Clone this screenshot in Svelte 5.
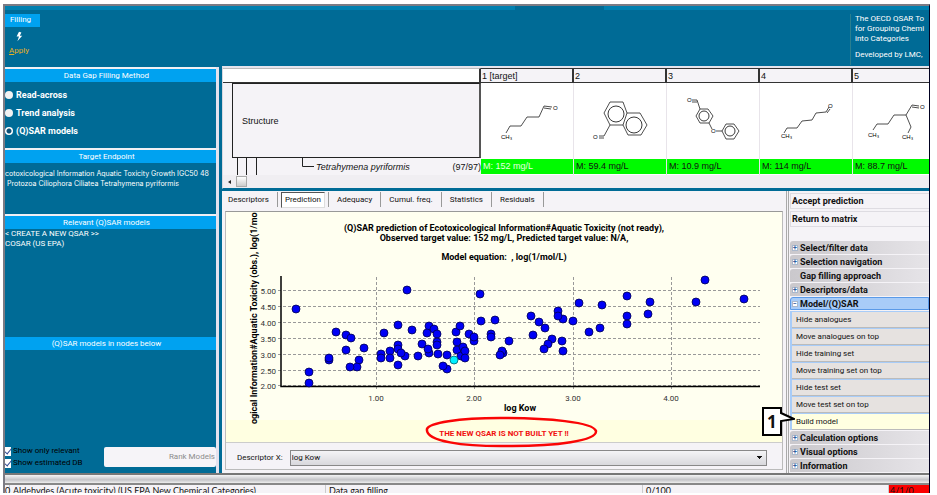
<script lang="ts">
    type Molecule = {
        id: string;
        value: string;
        bonds: string;
        rings?: [number, number, number][];
        atoms: [number, number, string][];
    };

    let method = $state("qsar");
    let onlyRelevant = $state(true);
    let showEstimated = $state(true);
    let activeTab = $state("Prediction");
    let descriptor = $state("log Kow");

    const methods = [
        { id: "read", label: "Read-across" },
        { id: "trend", label: "Trend analysis" },
        { id: "qsar", label: "(Q)SAR models" },
    ];

    const tabs = ["Descriptors", "Prediction", "Adequacy", "Cumul. freq.", "Statistics", "Residuals"];

    const molecules: Molecule[] = [
        {
            id: "1 [target]",
            value: "M: 152 mg/L",
            bonds: "M25 50L29 43H40L46 34H58L63 23L71 24M63 25L70 26",
            atoms: [[72, 27, "O"], [20, 56, "CH₃"]],
        },
        {
            id: "2",
            value: "M: 59.4 mg/L",
            bonds: "M36 19H49L53 30L49 42H36L30 30ZM53 30H66L73 42L67 52H54L49 42M36 42L30 53H25M30 55H25",
            rings: [[42, 31, 8], [60, 42, 8]],
            atoms: [[19, 56, "O"]],
        },
        {
            id: "3",
            value: "M: 10.9 mg/L",
            bonds: "M25 17H30L33 26M25 19H30M33 26H41L46 33L42 40H33L29 33ZM42 40L45 46M49 48H55L59 41H67L72 48L67 56H59L55 48",
            rings: [[37, 33, 5], [63, 48, 5]],
            atoms: [[20, 19, "O"], [44, 50, "O"]],
        },
        {
            id: "4",
            value: "M: 114 mg/L",
            bonds: "M24 50L27 45H37L42 38L52 37L56 30L66 29L69 24M67 30L70 26",
            atoms: [[68, 25, "O"], [21, 55, "CH₃"]],
        },
        {
            id: "5",
            value: "M: 88.7 mg/L",
            bonds: "M20 47L24 41H35L41 32H53L59 22L66 23M59 24L66 25M53 32L58 44L55 50",
            atoms: [[67, 26, "O"], [15, 54, "CH₃"], [49, 56, "CH₃"]],
        },
    ];

    const yTicks = [
        ["5.00", 78], ["4.50", 94], ["4.00", 110], ["3.50", 126],
        ["3.00", 142], ["2.50", 158], ["2.00", 173],
    ] as [string, number][];
    const xTicks = [["1.00", 150], ["2.00", 248], ["3.00", 347], ["4.00", 445]] as [string, number][];

    const points = [
        [70, 97], [181, 78], [254, 82], [255, 109], [269, 108], [83, 160], [83, 171],
        [103, 148], [103, 146], [110, 120], [120, 123], [125, 126], [120, 138], [138, 136],
        [133, 148], [131, 155], [124, 155], [158, 121], [172, 113], [186, 118], [155, 142],
        [155, 146], [164, 139], [164, 146], [172, 133], [172, 137], [179, 144], [175, 141],
        [172, 153], [192, 144], [196, 132], [203, 141], [202, 137], [203, 114], [201, 121],
        [208, 117], [211, 122], [211, 130], [211, 133], [212, 142], [221, 143], [221, 157],
        [217, 154], [230, 120], [234, 114], [231, 130], [231, 138], [237, 135], [235, 144],
        [239, 139], [239, 146], [243, 122], [248, 129], [248, 125], [265, 122], [265, 125],
        [283, 129], [277, 141], [276, 139], [274, 143], [479, 68], [518, 87], [470, 90],
        [424, 90], [422, 102], [401, 84], [401, 104], [401, 112], [376, 93], [353, 91],
        [347, 109], [337, 107], [332, 99], [332, 104], [305, 104], [313, 110], [319, 116],
        [374, 116], [363, 120], [307, 123], [326, 127], [322, 132], [318, 137], [336, 129],
        [337, 139],
    ];

    const actions = [
        "Hide analogues", "Move analogues on top", "Hide training set",
        "Move training set on top", "Hide test set", "Move test set on top",
    ];
</script>

{#snippet group(label: string, mark: string = "+")}
    <button class="group" class:open={mark === "−"}>
        <span class="mark" class:blank={!mark}>{mark}</span>{label}
    </button>
{/snippet}

<div class="window">
    <header class="banner">
        <div class="ribbon">
            <div class="ribbon-title">Filling</div>
            <button class="apply">
                <svg width="8" height="11" viewBox="0 0 10 12" aria-hidden="true">
                    <path d="M5 0L2 6h3L3 12L9 5H6L8 1z" fill="#fff" />
                </svg>
                <span><u>A</u>pply</span>
            </button>
        </div>
        <div class="progress-strip"></div>
        <div class="product">
            <p>The OECD QSAR To<br />for Grouping Chemi<br />into Categories</p>
            <p>Developed by LMC,</p>
        </div>
    </header>

    <div class="body">
        <aside class="sidebar">
            <section class="panel method">
                <h2>Data Gap Filling Method</h2>
                {#each methods as m}
                    <label class="radio">
                        <input type="radio" name="method" value={m.id} bind:group={method} />{m.label}
                    </label>
                {/each}
            </section>
            <section class="panel endpoint">
                <h2>Target Endpoint</h2>
                <p>cotoxicological Information Aquatic Toxicity Growth IGC50 48<br />&nbsp;Protozoa Ciliophora Ciliatea Tetrahymena pyriformis</p>
            </section>
            <section class="panel relevant">
                <h2>Relevant (Q)SAR models</h2>
                <ul>
                    <li>&lt; CREATE A NEW QSAR &gt;&gt;</li>
                    <li>COSAR (US EPA)</li>
                </ul>
            </section>
            <section class="panel nodes">
                <h2>(Q)SAR models in nodes below</h2>
                <div class="nodes-foot">
                    <div>
                        <label class="check"><input type="checkbox" bind:checked={onlyRelevant} />Show only relevant</label>
                        <label class="check"><input type="checkbox" bind:checked={showEstimated} />Show estimated DB</label>
                    </div>
                    <button class="rank" disabled>Rank Models</button>
                </div>
            </section>
        </aside>

        <div class="work">
            <div class="matrix">
                <table>
                    <thead>
                        <tr>
                            <th class="stub"></th>
                            {#each molecules as m}<th>{m.id}</th>{/each}
                        </tr>
                    </thead>
                    <tbody>
                        <tr class="structures">
                            <td class="stub"><div class="structure">Structure</div></td>
                            {#each molecules as m}
                                <td>
                                    <svg width="92" height="75" viewBox="0 0 92 75" aria-hidden="true">
                                        <path d={m.bonds} fill="none" stroke="#222" stroke-width="0.8" />
                                        {#each m.rings ?? [] as [cx, cy, r]}
                                            <circle {cx} {cy} {r} fill="none" stroke="#222" stroke-width="0.9" />
                                        {/each}
                                        {#each m.atoms as [x, y, name]}
                                            <text {x} {y} class="atom">{name}</text>
                                        {/each}
                                    </svg>
                                </td>
                            {/each}
                        </tr>
                        <tr class="values">
                            <td class="stub">
                                <div class="leaf">
                                    <svg width="83" height="17" viewBox="0 0 83 17" aria-hidden="true">
                                        <path d="M5.500 0V17M14.500 0V17M24.500 0V17M70.500 0V8.500H82" fill="none" stroke="#222" />
                                    </svg>
                                    <em>Tetrahymena pyriformis</em>
                                    <span>(97/97)</span>
                                </div>
                            </td>
                            {#each molecules as m, i}
                                <td class:target={i === 0}><div class="value">{m.value}</div></td>
                            {/each}
                        </tr>
                    </tbody>
                </table>
                <div class="scroll"><i></i><b></b></div>
            </div>

            <div class="lower">
                <main class="result">
                    <nav class="tabs">
                        {#each tabs as tab}
                            <button class="tab" class:active={activeTab === tab} onclick={() => (activeTab = tab)}>
                                <span>{tab}</span>
                            </button>
                        {/each}
                    </nav>

                    <div class="sheet">
                        <svg class="chart" viewBox="0 0 556 230" role="img" aria-label="QSAR prediction">
                            <rect width="556" height="230" fill="#ffffe1" />
                            <rect width="556" height="208" fill="#fffff0" />
                            <g class="title">
                                <text x="278" y="19">(Q)SAR prediction of Ecotoxicological Information#Aquatic Toxicity (not ready),</text>
                                <text x="278" y="29">Observed target value: 152 mg/L, Predicted target value: N/A,</text>
                                <text x="278" y="48" xml:space="preserve">Model equation:  , log(1/mol/L)</text>
                                <text x="294" y="199">log Kow</text>
                            </g>
                            <text class="y-title" transform="translate(31 212) rotate(-90)">ogical Information#Aquatic Toxicity (obs.), log(1/mo</text>

                            <g class="grid">
                                {#each yTicks as [label, y]}
                                    <path d="M52 {y}.5H534" />
                                    <text x="50" y={y + 4} text-anchor="end">{label}</text>
                                {/each}
                                {#each xTicks as [label, x]}
                                    <path d="M{x}.5 65V177" />
                                    <text {x} y="189" text-anchor="middle">{label}</text>
                                {/each}
                            </g>
                            <path d="M55 64V174.500H534" fill="none" stroke="#000" stroke-width="1.500" />

                            {#each points as [cx, cy]}
                                <circle {cx} {cy} r="4" fill="#0000f5" stroke="#000050" stroke-width="0.800" />
                            {/each}
                            <circle cx="228" cy="148" r="4" fill="#00f0ff" stroke="#006070" stroke-width="0.800" />

                            <text class="warning" x="278" y="224">THE NEW QSAR IS NOT BUILT YET !!</text>
                            <path
                                d="M201 217C203 211 232 206 274 206C322 206 367 210 370 219C371 229 329 234 286 234C236 235 199 229 201 217Z"
                                fill="none" stroke="#fa0505" stroke-width="2.500"
                            />
                        </svg>
                        <div class="descriptor">
                            <label for="descriptor">Descriptor X:</label>
                            <select id="descriptor" bind:value={descriptor}>
                                <option>log Kow</option>
                            </select>
                        </div>
                    </div>
                </main>

                <div class="menu">
                    <button class="command">Accept prediction</button>
                    <button class="command">Return to matrix</button>
                    <div class="groups">
                        {@render group("Select/filter data")}
                        {@render group("Selection navigation")}
                        {@render group("Gap filling approach", "")}
                        {@render group("Descriptors/data")}
                        {@render group("Model/(Q)SAR", "−")}
                        <div class="items">
                            {#each actions as action}
                                <button class="item">{action}</button>
                            {/each}
                            <div class="build">
                                <button class="item current">Build model</button>
                                <div class="callout">
                                    <svg width="34" height="32" viewBox="0 0 34 32" aria-hidden="true">
                                        <path d="M2 2H20V7L33 13L20 15V29H2Z" fill="#fff" stroke="#000" stroke-width="2" />
                                    </svg>
                                    <span>1</span>
                                </div>
                            </div>
                        </div>
                        {@render group("Calculation options")}
                        {@render group("Visual options")}
                        {@render group("Information")}
                    </div>
                </div>
            </div>
        </div>
    </div>

    <footer>
        <div class="splitter"></div>
        <div class="status">
            <span class="count">0</span>
            <span class="category">Aldehydes (Acute toxicity) (US EPA New Chemical Categories)</span>
            <span class="stage">Data gap filling</span>
            <span class="progress">0/100</span>
            <span class="alert">4/1/0</span>
        </div>
    </footer>
</div>

<style>
    :global(body) {
        background: #fff;
    }

    .window {
        margin: 4px 7px 0 3px;
        border: 2px solid #7b7b84;
        border-right: 1px solid #000020;
        border-bottom: 0;
        background: #006b96;
        font: 8px/12px Roboto, "Liberation Sans", sans-serif;
        color: #111;
        overflow: hidden;
    }

    * {
        box-sizing: border-box;
    }

    button,
    select {
        font: inherit;
        color: inherit;
        margin: 0;
    }

    button {
        border: 0;
        padding: 0;
        background: none;
        text-align: left;
    }

    .banner {
        display: flex;
        justify-content: space-between;
        height: 59px;
        border-top: 4px solid #0080b0;
        color: #fff;
    }

    .ribbon {
        width: 35px;
        padding-top: 4px;
    }

    .ribbon-title {
        height: 13px;
        padding-right: 4px;
        background: #00a2f0;
        text-align: center;
    }

    .apply {
        display: flex;
        flex-direction: column;
        align-items: center;
        gap: 3px;
        width: 28px;
        padding-top: 4px;
        color: #e8b020;
    }

    .progress-strip {
        width: 89px;
        height: 4px;
        margin: -4px 0 0 229px;
        background: #006b96;
    }

    .product {
        width: 79px;
        margin-top: 4px;
        padding-left: 4px;
        border-left: 1px solid #2a7f90;
        line-height: 10px;
        white-space: nowrap;
    }

    .product p {
        margin: 0 0 6px;
    }

    .body {
        display: grid;
        grid-template-columns: 214px minmax(0, 1fr);
        column-gap: 3px;
    }

    .sidebar {
        display: flex;
        flex-direction: column;
        margin-top: 2px;
        border-right: 3px solid #e4e2ee;
        color: #fff;
        overflow: hidden;
        white-space: nowrap;
    }

    .panel {
        border-top: 2px solid #f0f0f4;
    }

    .panel h2 {
        margin: 0;
        padding-right: 8px;
        background: #00a2f0;
        font-size: 8px;
        line-height: 13px;
        font-weight: normal;
        text-align: center;
    }

    .method {
        height: 81px;
    }

    .endpoint {
        height: 66px;
    }

    .relevant {
        height: 123px;
    }

    .nodes {
        display: flex;
        flex-direction: column;
        flex: 1;
        border-top: 0;
    }

    .panel p {
        margin: 6px 0 0;
        font-family: Inter, Roboto, sans-serif;
        font-size: 7px;
        line-height: 10px;
    }

    .panel ul {
        margin: 0;
        padding: 0;
        list-style: none;
        line-height: 10px;
    }

    .radio {
        display: flex;
        align-items: center;
        gap: 3px;
        height: 18px;
        font-size: 9px;
        font-weight: bold;
    }

    .method h2 {
        margin-bottom: 4px;
    }

    .radio input {
        appearance: none;
        width: 8px;
        height: 8px;
        margin: 0;
        border-radius: 50%;
        background: #f2f2f2;
    }

    .radio input:checked {
        background: radial-gradient(circle, #0a5078 2px, #fff 3px);
    }

    .nodes-foot {
        display: flex;
        align-items: center;
        justify-content: space-between;
        margin-top: auto;
        padding-bottom: 4px;
        color: #000;
    }

    .check {
        display: flex;
        align-items: center;
        gap: 2px;
    }

    .check input {
        appearance: none;
        width: 6px;
        height: 9px;
        margin: 0;
        background: #fff;
    }

    .check input:checked::after {
        content: "";
        display: block;
        width: 3px;
        height: 6px;
        margin-left: 1px;
        border: solid #304890;
        border-width: 0 1px 1px 0;
        transform: rotate(40deg);
    }

    .rank {
        width: 112px;
        height: 20px;
        padding-right: 1px;
        border-radius: 2px;
        background: #f6f4f8;
        color: #8c8c8c;
        text-align: right;
    }

    .matrix {
        margin-top: 1px;
        background: #f5f3f7;
        border-left: 1px solid #d8d8e0;
        border-top: 2px solid #e4e4ec;
        border-bottom: 1px solid #006b96;
        overflow: hidden;
        font-family: "Liberation Sans", sans-serif;
        font-size: 9px;
    }

    table {
        width: 723px;
        table-layout: fixed;
        border-collapse: separate;
        border-spacing: 0;
    }

    th,
    td {
        width: 93px;
        padding: 0;
        text-align: left;
        font-weight: normal;
    }

    th {
        height: 15px;
        padding-left: 1px;
        border: 1px solid #333;
        border-width: 1px 2px 1px 0;
    }

    td {
        border-right: 1px solid #e8e4ea;
        background: #fff;
    }

    .stub {
        width: 258px;
    }

    th.stub {
        background: #fff;
        border-top-color: #bbb;
    }

    td.stub {
        border-right: 0;
        background: #f5f3f7;
    }

    .structures svg {
        display: block;
    }

    .atom {
        font: 6px "Liberation Sans", sans-serif;
    }

    .structure {
        height: 75px;
        margin-left: 9px;
        padding-left: 9px;
        border: 1px solid #222;
        border-right: 2px solid #555;
        line-height: 74px;
    }

    .leaf {
        display: flex;
        align-items: center;
        height: 17px;
        margin-left: 9px;
    }

    .leaf em {
        flex: 1;
        padding-left: 1px;
    }

    .value {
        height: 15px;
        padding-left: 2px;
        background: #00fa00;
        line-height: 15px;
    }

    .target {
        color: #e8ffe0;
    }

    .scroll {
        display: flex;
        align-items: center;
        gap: 5px;
        height: 13px;
        padding-left: 5px;
        background: #f0eef2;
    }

    .scroll i {
        border: 2px solid transparent;
        border-right: 3px solid #222;
        border-left: 0;
    }

    .scroll b {
        width: 11px;
        height: 11px;
        border: 1px solid #aaa;
        background: linear-gradient(#fff, #ccc);
    }

    .lower {
        display: grid;
        grid-template-columns: minmax(0, 1fr) 143px;
        margin-top: 2px;
        background: #f5f3f7;
    }

    .result {
        padding: 0 4px 3px;
    }

    .tabs {
        display: flex;
        height: 20px;
        padding-top: 1px;
    }

    .tab {
        height: 15px;
        padding: 0 8px;
        border-right: 1px solid #999;
    }

    .tab:first-child {
        padding-left: 2px;
    }

    .tab span {
        display: block;
        line-height: 14px;
    }

    .tab.active {
        padding: 0 3px;
    }

    .tab.active span {
        padding: 0 3px;
        border: 1px solid #555;
        border-color: #555 #ddd #ddd #555;
        background: #fff;
    }

    .sheet {
        border: 1px solid #bbb;
        border-top-color: #999;
        margin: 0 -1px;
    }

    .chart {
        position: relative;
        display: block;
        width: 100%;
        overflow: visible;
    }

    .title text,
    .y-title {
        font-size: 9px;
        font-weight: bold;
    }

    .title text {
        text-anchor: middle;
    }

    .grid path {
        fill: none;
        stroke: #999;
        stroke-dasharray: 3 2;
    }

    .grid text {
        fill: #333;
    }

    .warning {
        font-weight: bold;
        text-anchor: middle;
        fill: #f01010;
    }

    .descriptor {
        display: flex;
        align-items: center;
        gap: 7px;
        height: 27px;
        padding: 3px 15px 0 11px;
        border-top: 1px solid #ccc;
    }

    .descriptor select {
        flex: 1;
        appearance: none;
        height: 16px;
        padding: 0 1px;
        border: 1px solid #888;
        border-radius: 0;
        background:
            conic-gradient(from -45deg at 50% 100%, #111 90deg, transparent 0) right 4px center / 6px 3px no-repeat,
            linear-gradient(#f4f4f6, #d8d8dc);
    }

    .menu {
        padding: 2px 0 1px 1px;
        border-left: 3px double #aaa;
    }

    .command {
        display: block;
        width: 100%;
        height: 16px;
        margin-bottom: 2px;
        padding-left: 1px;
        border: 1px solid #dedce2;
        border-right: 0;
        font-size: 9px;
        font-weight: bold;
    }

    .groups {
        display: flex;
        flex-direction: column;
        gap: 1px;
        padding-top: 12px;
    }

    .group {
        display: flex;
        align-items: center;
        gap: 2px;
        height: 13px;
        padding-left: 2px;
        border-radius: 3px 0 0 0;
        background: linear-gradient(90deg, #cac8cc, #e6e4e8);
        font-size: 9px;
        font-weight: bold;
    }

    .group.open {
        padding-left: 1px;
        border: 1px solid #5a9ae8;
        background: #a8ccf8;
    }

    .mark {
        width: 6px;
        height: 6px;
        border: 1px solid #aab8cc;
        background: #fff;
        color: #3060a0;
        font-size: 7px;
        line-height: 4px;
        text-align: center;
    }

    .mark.blank {
        visibility: hidden;
    }

    .items {
        display: flex;
        flex-direction: column;
        gap: 1px;
        padding: 1px 0 0 2px;
        background: #a8ccf8;
    }

    .item {
        display: block;
        width: 100%;
        height: 16px;
        padding-left: 4px;
        border-bottom: 1px solid #bbb;
        background: #e6e2e0;
    }

    .item.current {
        background: #ffffe1;
    }

    .build {
        position: relative;
    }

    .callout {
        position: absolute;
        right: 100%;
        top: -8px;
        width: 34px;
        margin-right: -3px;
    }

    .callout svg {
        display: block;
    }

    .callout span {
        position: absolute;
        left: 6px;
        top: 8px;
        font: bold 17px/16px "Open Sans", sans-serif;
    }

    .splitter {
        height: 12px;
        border-top: 2px solid #777;
        border-bottom: 2px solid #888;
        background: linear-gradient(#f4f4f6, #c4c4c8 60%, #eee);
    }

    .status {
        display: grid;
        grid-template-columns: 5px 316px 317px 1fr 40px;
        height: 8px;
        background: #f5f3f7;
        overflow: hidden;
        font-family: Lato, Roboto, sans-serif;
        font-size: 9px;
        line-height: 12px;
        white-space: nowrap;
    }

    .status span {
        padding-left: 3px;
        border-right: 1px solid #ccc;
    }

    .status .count {
        padding: 0;
    }

    .status .alert {
        padding-left: 1px;
        border: 0;
        background: #fa0000;
    }
</style>
